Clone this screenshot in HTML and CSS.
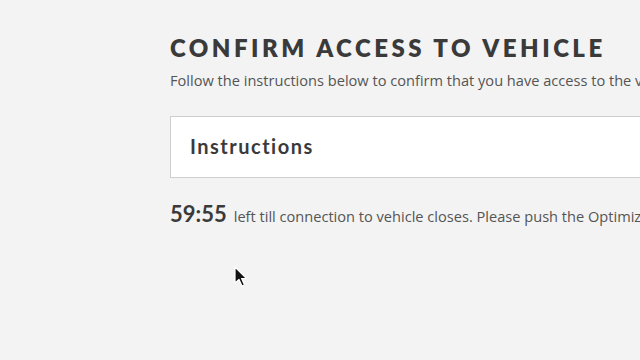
FILE: index.html
```html
<!DOCTYPE html>
<html lang="en">
<head>
    <meta charset="UTF-8">
    <meta name="viewport" content="width=device-width, initial-scale=1.0">
    <title>Confirm access</title>
    <link rel="stylesheet" href="styles.css">
</head>
<body>
    <div class="page">
        <h1>Confirm access to vehicle</h1>
        <p class="lead">Follow the instructions below to confirm that you have access to the vehicle.</p>
        <div class="panel">
            <h2>Instructions</h2>
        </div>
        <p class="timer"><span class="clock">59:55</span> left till connection to vehicle closes. Please push the Optimize button.</p>
    </div>
    <svg class="cursor" width="14" height="22" viewBox="0 0 14 22">
        <path d="M1 1 L1 17 L5 13.5 L8 20 L10.5 19 L7.6 12.6 L12.5 12.6 Z" fill="#111" stroke="#fff" stroke-width="1.2" stroke-linejoin="round"/>
    </svg>
</body>
</html>
```

FILE: styles.css
```css
body{
    margin: 0;
    background: #f3f3f3;
    font-family: Lato, "Open Sans", sans-serif;
    color: #3c3c3c;
    overflow: hidden;
    height: 360px;
}
.page{
    padding: 33px 0 0 170px;
    width: 760px;
}
h1{
    margin: 0;
    font-size: 24px;
    line-height: 30px;
    font-weight: 800;
    text-transform: uppercase;
    letter-spacing: 3.5px;
    color: #3a3a3a;
}
.lead{
    margin: 7px 0 0;
    font-family: "Open Sans", sans-serif;
    font-size: 14.6px;
    line-height: 20px;
    white-space: nowrap;
    color: #555;
}
.panel{
    margin-top: 26px;
    height: 60px;
    background: #fff;
    border: 1px solid #cfcfcf;
    display: flex;
    align-items: center;
    padding-left: 19px;
}
h2{
    margin: 0 0 3px;
    font-size: 20px;
    font-weight: 700;
    letter-spacing: 1.5px;
    color: #3a3a3a;
}
.timer{
    margin: 22px 0 0;
    font-family: "Open Sans", sans-serif;
    font-size: 14.6px;
    white-space: nowrap;
    color: #555;
    display: flex;
    align-items: baseline;
    gap: 7px;
}
.clock{
    font-family: Lato, sans-serif;
    font-size: 22px;
    font-weight: 700;
    color: #3a3a3a;
}
.cursor{
    position: absolute;
    left: 234px;
    top: 266px;
}
```
